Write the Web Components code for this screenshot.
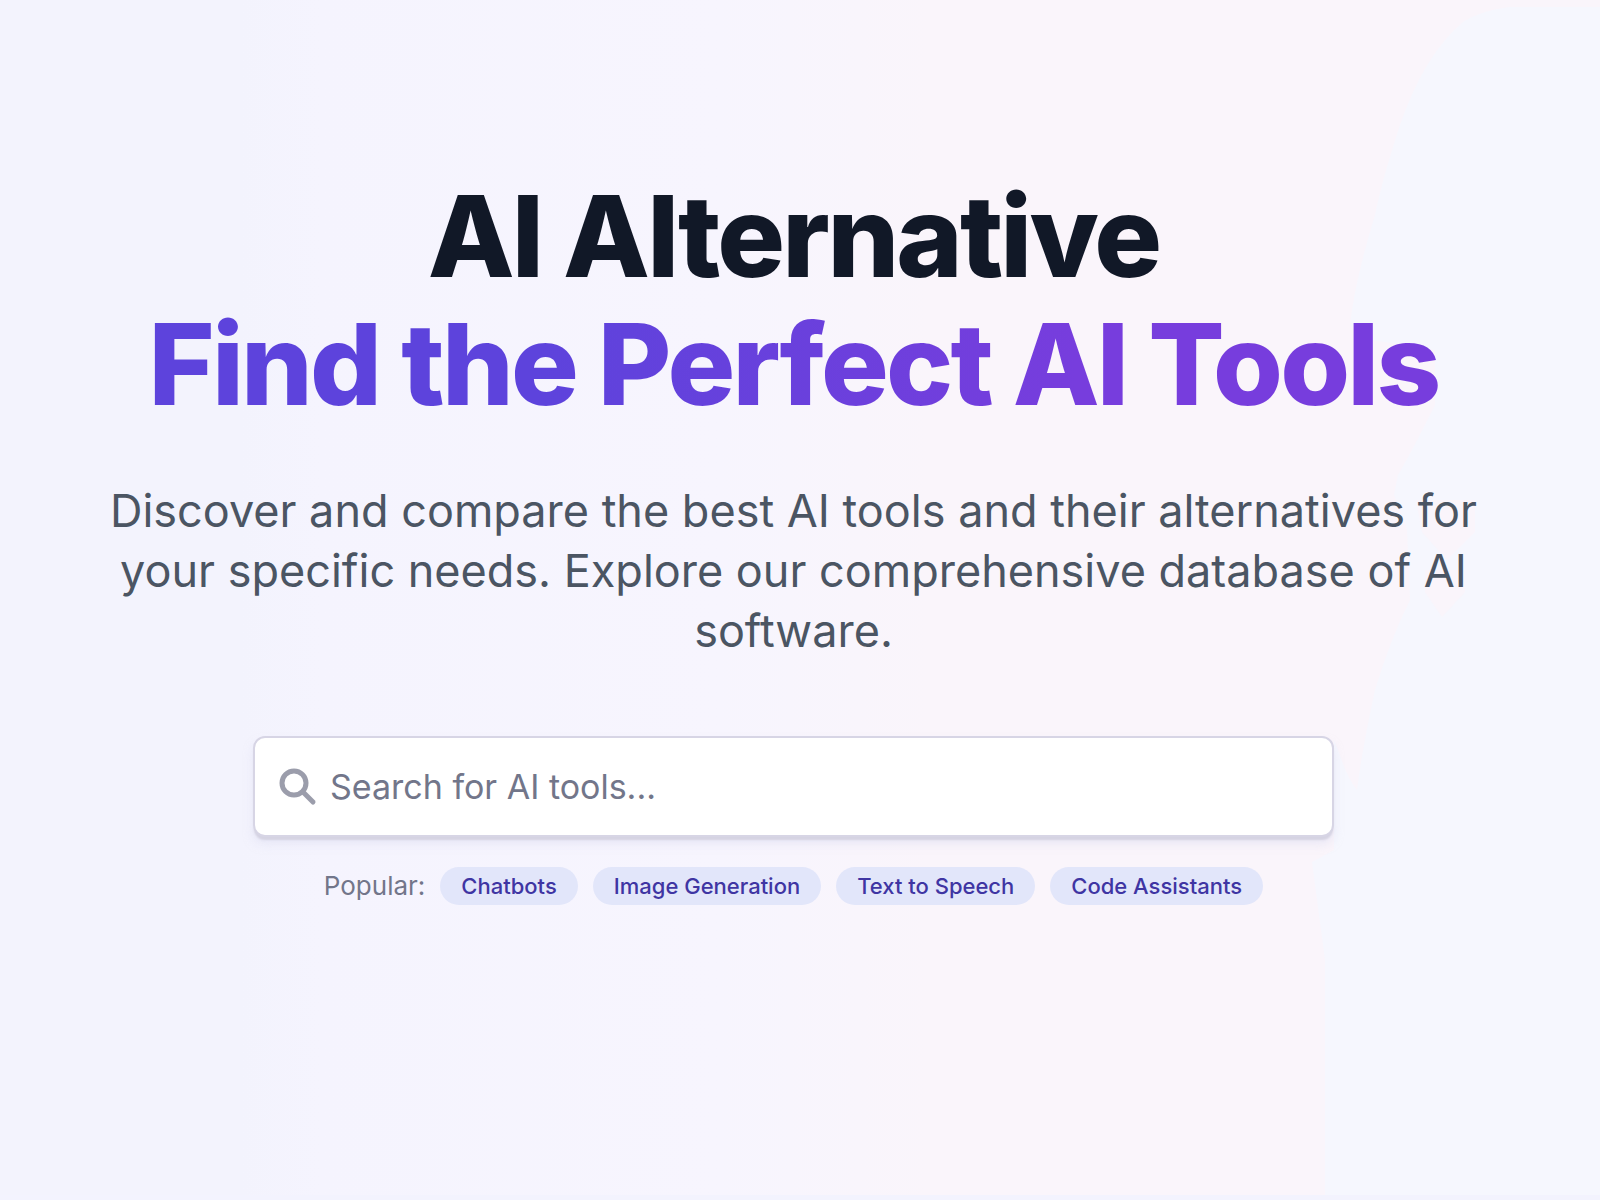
<!DOCTYPE html>
<html lang="en">
<head>
<meta charset="utf-8">
<title>AI Alternative</title>
<style>
html, body { margin: 0; min-height: 100%; }
body { font-family: Inter, "Liberation Sans", sans-serif; background: #f6f4fe; }
</style>
</head>
<body>
<hero-section>
  <hero-title><span>AI Alternative</span><span slot="accent">Find the Perfect AI Tools</span></hero-title>
  <hero-lead>Discover and compare the best AI tools and their alternatives for your specific needs. Explore our comprehensive database of AI software.</hero-lead>
  <search-box></search-box>
  <popular-tags>
    <tag-chip>Chatbots</tag-chip>
    <tag-chip>Image Generation</tag-chip>
    <tag-chip>Text to Speech</tag-chip>
    <tag-chip>Code Assistants</tag-chip>
  </popular-tags>
</hero-section>
<script>
const define = (name, html) => customElements.define(name, class extends HTMLElement {
  constructor() {
    super();
    this.attachShadow({ mode: 'open' }).innerHTML = html;
  }
});

define('hero-section', `
<style>
:host { display: block; position: relative; box-sizing: border-box; min-height: 100vh;
  padding: 172px 84px 80px 71px; border-bottom: 5px solid #f3f3fe;
  background: linear-gradient(90deg, #f3f3fd 0%, #f3f3fd 15%, #f5f4fe 20%, #f7f5fe 45%, #faf5fb 58%, #faf5fb 100%); }
.wave { position: absolute; inset: 0; width: 100%; height: 100%; }
main { position: relative; display: flex; flex-direction: column; align-items: center; }
</style>
<svg class="wave" viewBox="0 0 1600 1195" preserveAspectRatio="none" aria-hidden="true">
  <path fill="#f6f7fe" d="M1600 7H1510Q1482 10 1463 22Q1424 55 1400 125Q1382 180 1375 215Q1355 280 1350 325L1372 340L1435 350V405Q1410 455 1398 475L1394 495Q1405 520 1407 530L1410 600Q1390 640 1375 690Q1362 750 1357 790Q1348 780 1338 750L1334 740V850L1312 862L1325 960V1195H1600Z"/>
  <path fill="#faf5fb" d="M1416 500H1475V532L1447 560L1422 532ZM1425 570H1465V592L1442 617L1425 592Z"/>
</svg>
<main><slot></slot></main>`);

define('hero-title', `
<style>
:host { display: block; }
h1 { margin: 0; font-size: 113px; line-height: 128px; font-weight: 800; letter-spacing: -0.025em; text-align: center; color: #111827; }
.line { display: block; }
.accent { background: linear-gradient(90deg, #5d43dc 0%, #5d43dc 30%, #773ddd 72%, #773ddd 100%); -webkit-background-clip: text; background-clip: text; color: transparent; }
</style>
<h1><span class="line"><slot></slot></span><span class="line accent"><slot name="accent"></slot></span></h1>`);

define('hero-lead', `
<style>
:host { display: block; max-width: 1445px; margin-top: 53px; }
p { margin: 0; font-size: 45px; line-height: 60px; text-align: center; color: #4b5563; }
</style>
<p><slot></slot></p>`);

define('search-box', `
<style>
:host { display: block; width: 100%; max-width: 1081px; margin-top: 75px; }
label { display: flex; align-items: center; box-sizing: border-box; height: 101px; padding: 0 24px; gap: 13px;
  background: #fff; border: 2px solid #d7d5e5; border-radius: 12px;
  box-shadow: 0 4px 2px -1px #d5d3e2, 0 7px 10px 0 #dcdcf280; }
svg { flex: none; width: 38px; height: 38px; }
input { flex: 1; min-width: 0; border: 0; outline: 0; padding: 0; background: none; font: 34px/50px Inter, sans-serif; color: #111827; }
input::placeholder { color: #72768a; opacity: 1; }
</style>
<label>
  <svg viewBox="0 0 38 38" fill="none" stroke="#9b9dab" stroke-width="5" stroke-linecap="round" aria-hidden="true"><circle cx="15" cy="15" r="12"/><path d="M24 24L34 34"/></svg>
  <input type="text" placeholder="Search for AI tools..." aria-label="Search for AI tools">
</label>`);

define('popular-tags', `
<style>
:host { display: flex; flex-wrap: wrap; justify-content: center; align-items: center; gap: 15px; margin-top: 30px; }
.label { font-size: 26px; line-height: 38px; color: #72768a; }
</style>
<span class="label">Popular:</span><slot></slot>`);

define('tag-chip', `
<style>
:host { display: block; }
button { display: block; margin: 0; border: 0; height: 38px; padding: 0 21px; border-radius: 19px; background: #e2e6fa; color: #3f35a3; font: 500 22px/38px Inter, sans-serif; cursor: pointer; }
</style>
<button type="button"><slot></slot></button>`);
</script>
</body>
</html>
